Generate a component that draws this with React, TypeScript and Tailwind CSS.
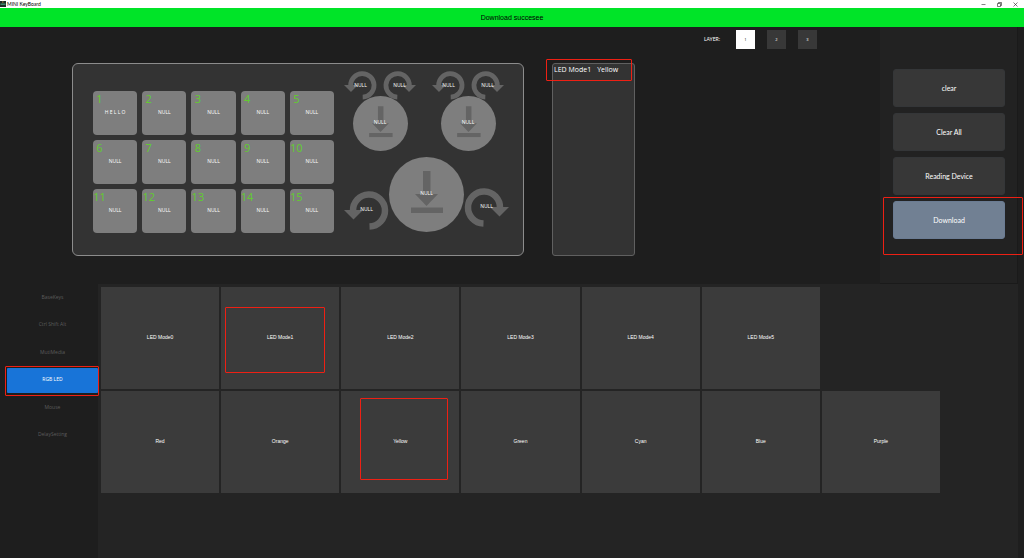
import React, { useState } from 'react';

const keyLabels = [
  'H E L L O', 'NULL', 'NULL', 'NULL', 'NULL',
  'NULL', 'NULL', 'NULL', 'NULL', 'NULL',
  'NULL', 'NULL', 'NULL', 'NULL', 'NULL',
];

const layers = ['1', '2', '3'];

const actions = ['clear', 'Clear All', 'Reading Device', 'Download'];

const tabs = ['BaseKeys', 'Ctrl Shift Alt', 'MutiMedia', 'RGB LED', 'Mouse', 'DelaySetting'];

const ledModes = ['LED Mode0', 'LED Mode1', 'LED Mode2', 'LED Mode3', 'LED Mode4', 'LED Mode5'];

const ledColors = ['Red', 'Orange', 'Yellow', 'Green', 'Cyan', 'Blue', 'Purple'];

const Highlight = ({ className }: { className: string }) => (
  <div className={`pointer-events-none absolute rounded-[1px] border border-[#ee2014] ${className}`} />
);

// Knob rotation arrow, drawn counter-clockwise
const TurnLeft = () => (
  <svg viewBox="0 0 45 39" className="w-full">
    <path d="M9 20 A16 16 0 1 1 25.500 35.500" fill="none" stroke="#646464" strokeWidth="6.500" />
    <path d="M0 19 H19 L9.500 28.500 Z" fill="#646464" />
  </svg>
);

const TurnRight = () => (
  <svg viewBox="0 0 45 39" className="w-full">
    <path d="M36 20 A16 16 0 1 0 19.500 35.500" fill="none" stroke="#646464" strokeWidth="6.500" />
    <path d="M45 19 H26 L35.500 28.500 Z" fill="#646464" />
  </svg>
);

const PressIcon = () => (
  <svg viewBox="0 0 75 75" className="h-full w-full">
    <g fill="#646464">
      <path d="M34 14 H41.500 V37 H49 L37.500 49 L26 37 H34 Z" />
      <path d="M22 50.500 H54 V56 H22 Z" />
    </g>
  </svg>
);

const NullText = () => (
  <span className="absolute inset-0 flex items-center justify-center text-[5px] text-white">NULL</span>
);

const SmallKnob = () => (
  <div className="flex w-[72px] flex-col items-center">
    <div className="flex w-full justify-between">
      <button className="relative w-[33px]">
        <TurnLeft />
        <NullText />
      </button>
      <button className="relative w-[33px]">
        <TurnRight />
        <NullText />
      </button>
    </div>
    <button className="relative -mt-1 size-[55px] rounded-full bg-[#7e7e7e]">
      <PressIcon />
      <NullText />
    </button>
  </div>
);

const BigKnob = () => (
  <div className="flex items-start">
    <button className="relative mt-[34px] w-[45px]">
      <TurnLeft />
      <NullText />
    </button>
    <button className="relative size-[75px] rounded-full bg-[#7e7e7e]">
      <PressIcon />
      <NullText />
    </button>
    <button className="relative mt-[31px] w-[45px]">
      <TurnRight />
      <NullText />
    </button>
  </div>
);

const TitleBar = () => (
  <header className="flex h-2 items-center justify-between bg-white pr-[6px]">
    <div className="flex items-center gap-px">
      <svg viewBox="0 0 12 12" className="size-[6px]">
        <rect width="12" height="12" fill="#1c2a26" />
        <rect x="1" y="5" width="10" height="3" fill="#3c8a6a" />
        <rect x="4" y="1" width="3" height="2" fill="#b08a3c" />
      </svg>
      <h1 className="font-['Lato',sans-serif] text-[5px] leading-[8px] text-black">MINI KeyBoard</h1>
    </div>
    <div className="flex items-center gap-[11px]">
      <button aria-label="Minimize">
        <svg viewBox="0 0 5 5" className="size-[5px]">
          <path d="M0.500 2.500 H4.500" stroke="#333" strokeWidth="0.600" />
        </svg>
      </button>
      <button aria-label="Restore">
        <svg viewBox="0 0 5 5" className="size-[5px]">
          <path d="M0.500 1.500 H3.500 V4.500 H0.500 Z M1.500 1.500 V0.500 H4.500 V3.500 H3.500" fill="none" stroke="#222" strokeWidth="0.600" />
        </svg>
      </button>
      <button aria-label="Close">
        <svg viewBox="0 0 5 5" className="size-[5px]">
          <path d="M0.500 0.500 L4.500 4.500 M4.500 0.500 L0.500 4.500" stroke="#222" strokeWidth="0.600" />
        </svg>
      </button>
    </div>
  </header>
);

const App = () => {
  const [layer, setLayer] = useState('1');
  const [tab, setTab] = useState('RGB LED');

  return (
    <div className="flex min-h-screen flex-col bg-[#1e1e1e] font-['Open_Sans','Noto_Sans',sans-serif] text-white">
      <TitleBar />

      <div role="status" className="h-[19px] bg-[#00e428] text-center font-['Liberation_Sans',sans-serif] text-[7px] leading-[19px] text-black">
        Download succesee
      </div>

      <div className="flex pr-[6px]">
        <main className="flex-1 pb-7 pl-[72px]">
          {/* Layer switch */}
          <div className="flex items-center justify-end gap-3 pt-[3px] pr-[63px]">
            <span className="mr-1 font-['Lato',sans-serif] text-[5px]">LAYER:</span>
            {layers.map((item) => (
              <button
                key={item}
                onClick={() => setLayer(item)}
                className={`size-[19px] text-[4px] ${
                  layer === item ? 'bg-white text-black' : 'bg-[#383838] text-white'
                }`}
              >
                {item}
              </button>
            ))}
          </div>

          <div className="mt-[14px] flex gap-7">
            {/* Keyboard */}
            <section className="flex h-[193px] w-[452px] items-start rounded-md border border-[#8c8c8c] bg-[#333] pl-5">
              <div className="mt-[27px] grid w-[241px] grid-cols-5 gap-[5px]">
                {keyLabels.map((label, index) => (
                  <button key={index} className="relative h-11 rounded bg-[#7e7e7e] text-[5px]">
                    <span className="absolute top-0 left-0 w-[13px] text-center font-['Noto_Sans',sans-serif] text-[11px] leading-4 text-[#63c834]">
                      {index + 1}
                    </span>
                    {label}
                  </button>
                ))}
              </div>
              <div className="mt-[7px] ml-[10px] flex flex-col gap-[6px]">
                <div className="flex gap-4">
                  <SmallKnob />
                  <SmallKnob />
                </div>
                <BigKnob />
              </div>
            </section>

            {/* Assigned functions */}
            <section className="relative w-[83px] rounded-[3px] border border-[#606060] bg-[#333] px-px text-[7px]">
              <p className="flex gap-[6px] leading-3">
                <span>LED Mode1</span>
                <span>Yellow</span>
              </p>
              <Highlight className="-top-[5px] -left-[7px] h-[22px] w-[86px]" />
            </section>
          </div>
        </main>

        <aside className="flex w-[138px] flex-col gap-[6px] border-r border-b border-[#1a1a1a] bg-[#222] pt-[42px] pr-3 pl-[13px]">
          {actions.map((action) => (
            <div key={action} className="relative">
              <button
                className={`block h-[38px] w-full rounded-[3px] border font-['Lato',sans-serif] text-[7px] ${
                  action === 'Download' ? 'border-[#6b7c93] bg-[#718093]' : 'border-[#343638] bg-[#373737]'
                }`}
              >
                {action}
              </button>
              {action === 'Download' && <Highlight className="-top-1 -right-[18px] -left-[10px] h-[58px]" />}
            </div>
          ))}
        </aside>
      </div>

      <div className="flex flex-1 pr-[6px]">
        <nav className="w-[98px] pt-px pl-[7px]">
          <div className="grid h-[165px] grid-rows-6">
            {tabs.map((item) => (
              <div key={item} className="relative">
                <button
                  onClick={() => setTab(item)}
                  className={`block h-[25px] w-full rounded-[1px] text-[5px] ${
                    tab === item ? 'bg-[#1874d8] text-white' : 'text-[#5c5c5c]'
                  }`}
                >
                  {item}
                </button>
                {tab === item && <Highlight className="-top-[2px] -right-px -left-[2px] h-[30px]" />}
              </div>
            ))}
          </div>
        </nav>

        <section className="flex flex-1 flex-col gap-[2px] bg-[#242424] pt-[3px] pr-[78px] pl-[3px] font-['Liberation_Sans',sans-serif] text-[5px]">
          <div className="grid grid-cols-7 gap-[2px]">
            {ledModes.map((mode) => (
              <button key={mode} className="relative h-[102px] bg-[#3b3b3b]">
                {mode}
                {mode === 'LED Mode1' && <Highlight className="top-5 left-1 h-[66px] w-[100px]" />}
              </button>
            ))}
          </div>
          <div className="grid grid-cols-7 gap-[2px]">
            {ledColors.map((color) => (
              <button key={color} className="relative h-[102px] bg-[#3b3b3b]">
                {color}
                {color === 'Yellow' && <Highlight className="top-[7px] left-[19px] h-[82px] w-[88px]" />}
              </button>
            ))}
          </div>
        </section>
      </div>
    </div>
  );
};

export default App;
